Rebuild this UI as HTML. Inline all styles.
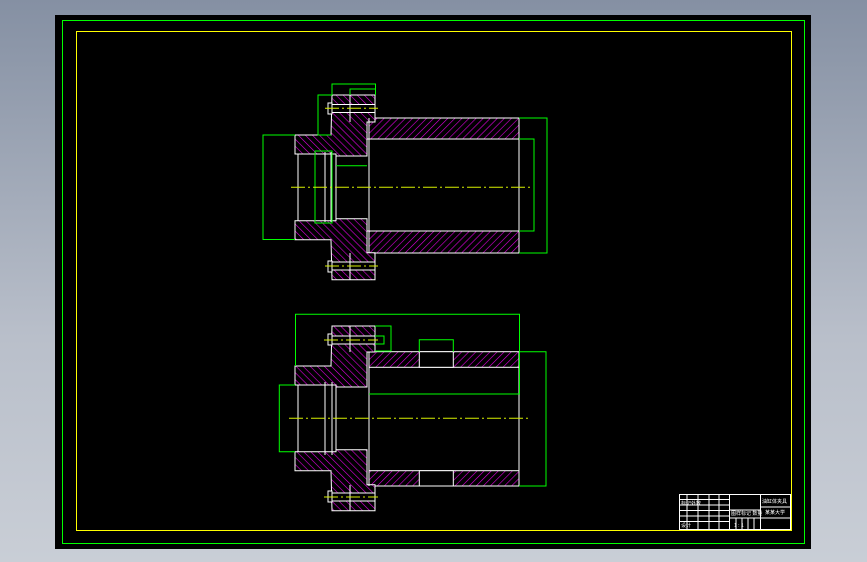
<!DOCTYPE html>
<html><head><meta charset="utf-8"><style>
html,body{margin:0;padding:0;width:867px;height:562px;overflow:hidden;background:linear-gradient(#8590a3,#b9bfca 60%,#c9ced6);}
svg{position:absolute;left:0;top:0}
</style></head><body>
<svg width="867" height="562" viewBox="0 0 867 562" xmlns="http://www.w3.org/2000/svg">
<defs>
<pattern id="h1" patternUnits="userSpaceOnUse" width="5" height="5" patternTransform="rotate(45)"><rect width="5" height="5" fill="#000"/><line x1="0" y1="0" x2="0" y2="5" stroke="#e000e0" stroke-width="1.2"/></pattern>
<pattern id="h2" patternUnits="userSpaceOnUse" width="5" height="5" patternTransform="rotate(-45)"><rect width="5" height="5" fill="#000"/><line x1="0" y1="0" x2="0" y2="5" stroke="#e000e0" stroke-width="1.2"/></pattern>
</defs>
<rect x="55" y="15" width="756" height="534" fill="#000"/>
<rect x="62.5" y="20.5" width="742" height="523" fill="none" stroke="#00ff00" stroke-width="1"/>
<rect x="76.5" y="31.5" width="715" height="499" fill="none" stroke="#ffff00" stroke-width="1"/>

<!-- TOP VIEW -->
<g stroke="#fff" stroke-width="1">
<rect x="369" y="118" width="150" height="21" fill="url(#h1)"/>
<rect x="369" y="231" width="150" height="22" fill="url(#h1)"/>
<polygon points="295,135 331,135 332,95 375,95 375,122 367,122 367,156 336,156 336,154 295,154" fill="url(#h2)"/>
<polygon points="295,239.7 331,239.7 332,279.7 375,279.7 375,252.7 367,252.7 367,218.7 336,218.7 336,220.7 295,220.7" fill="url(#h2)"/>
<line x1="369" y1="118" x2="369" y2="253"/>
<line x1="519" y1="118" x2="519" y2="253"/>
<line x1="367" y1="139" x2="519" y2="139"/><line x1="367" y1="231" x2="519" y2="231"/>
<line x1="298" y1="154" x2="298" y2="221"/>
<line x1="325" y1="152" x2="325" y2="222"/><line x1="331" y1="152" x2="331" y2="222"/>
<line x1="336" y1="156" x2="336" y2="219"/>
<rect x="332" y="104.5" width="43" height="8" fill="#000"/>
<rect x="332" y="262" width="43" height="8" fill="#000"/>
<rect x="328" y="103" width="4" height="11" fill="#000"/>
<rect x="328" y="261" width="4" height="11" fill="#000"/>
<line x1="350" y1="95" x2="350" y2="122"/><line x1="350" y1="253" x2="350" y2="280"/>
</g>
<g stroke="#00ff00" stroke-width="1" fill="none">
<polyline points="332,95 332,84 375.5,84 375.5,95"/>
<polyline points="350,95 350,89 375.5,89"/>
<polyline points="332,95 318,95 318,135 331,135"/>
<polyline points="295,135 263,135 263,239.5 295,239.5"/>
<polyline points="519,118 547,118 547,253 519,253"/>
<polyline points="519,139 534,139 534,231 519,231"/>
<rect x="315" y="151" width="17" height="72"/>
<line x1="336" y1="165.7" x2="367" y2="165.7"/>
</g>
<g stroke="#d8f000" stroke-width="1" stroke-dasharray="14,3,2,3">
<line x1="291" y1="187.3" x2="530" y2="187.3"/>
<line x1="325" y1="108.3" x2="378" y2="108.3"/>
<line x1="325" y1="266" x2="378" y2="266"/>
</g>

<!-- BOTTOM VIEW -->
<g stroke="#fff" stroke-width="1">
<rect x="369" y="351.7" width="150" height="15.6" fill="url(#h1)"/>
<rect x="369" y="470.7" width="150" height="15.3" fill="url(#h1)"/>
<rect x="419.3" y="351.7" width="34" height="15.6" fill="#000"/>
<rect x="419.3" y="470.7" width="34" height="15.3" fill="#000"/>
<polygon points="295,366 331,366 332,326 375,326 375,352 367,352 367,387 336,387 336,385 295,385" fill="url(#h2)"/>
<polygon points="295,470.7 331,470.7 332,510.7 375,510.7 375,484.7 367,484.7 367,449.7 336,449.7 336,451.7 295,451.7" fill="url(#h2)"/>
<line x1="369" y1="352" x2="369" y2="486"/><line x1="519" y1="352" x2="519" y2="486"/>
<line x1="298" y1="385" x2="298" y2="452"/>
<line x1="325" y1="382" x2="325" y2="455"/><line x1="332" y1="382" x2="332" y2="455"/>
<line x1="336" y1="387" x2="336" y2="450"/>
<rect x="332" y="336" width="43" height="8" fill="#000"/>
<rect x="332" y="493" width="43" height="8" fill="#000"/>
<rect x="328" y="334" width="4" height="11" fill="#000"/>
<rect x="328" y="491" width="4" height="11" fill="#000"/>
<line x1="350" y1="326" x2="350" y2="352"/><line x1="350" y1="485" x2="350" y2="511"/>
</g>
<g stroke="#00ff00" stroke-width="1" fill="none">
<polyline points="295.5,366 295.5,314.3 519.5,314.3 519.5,394 369,394"/>
<polyline points="519,351.7 546,351.7 546,486 519,486"/>
<polyline points="295,385 279.3,385 279.3,451.7 295,451.7"/>
<polyline points="419.3,351.7 419.3,339.7 453.3,339.7 453.3,351.7"/>
<polyline points="375,326 391,326 391,351 375,351"/>
<polyline points="375,336 384,336 384,344 375,344"/>
</g>
<g stroke="#d8f000" stroke-width="1" stroke-dasharray="14,3,2,3">
<line x1="289" y1="418.3" x2="530" y2="418.3"/>
<line x1="324" y1="340" x2="378" y2="340"/>
<line x1="324" y1="497" x2="378" y2="497"/>
</g>

<!-- TITLE BLOCK -->
<g stroke="#fff" stroke-width="1" fill="none">
<rect x="679.5" y="494.5" width="111" height="35"/>
<line x1="729.5" y1="494.5" x2="729.5" y2="530"/>
<line x1="760.5" y1="494.5" x2="760.5" y2="530"/>
<line x1="760.5" y1="507" x2="791" y2="507"/>
<line x1="760.5" y1="518" x2="791" y2="518"/>
<line x1="729.5" y1="510" x2="760.5" y2="510"/>
<line x1="729.5" y1="518" x2="760.5" y2="518"/>
<line x1="687" y1="494.5" x2="687" y2="530"/>
<line x1="698" y1="494.5" x2="698" y2="530"/>
<line x1="709" y1="494.5" x2="709" y2="530"/>
<line x1="719" y1="494.5" x2="719" y2="530"/>
<line x1="679.5" y1="499.5" x2="729.5" y2="499.5"/>
<line x1="679.5" y1="505" x2="729.5" y2="505"/>
<line x1="679.5" y1="510.5" x2="729.5" y2="510.5"/>
<line x1="679.5" y1="516" x2="729.5" y2="516"/>
<line x1="679.5" y1="521.5" x2="729.5" y2="521.5"/>
<line x1="736" y1="518" x2="736" y2="530"/><line x1="742" y1="518" x2="742" y2="530"/><line x1="748" y1="518" x2="748" y2="530"/><line x1="754" y1="518" x2="754" y2="530"/>
</g>
<g fill="#fff" font-family="Liberation Sans, 'Noto Sans CJK SC', sans-serif" font-size="5">
<text x="762" y="503">油缸体夹具</text>
<text x="765" y="514">某某大学</text>
<text x="731" y="515">图样标记 数量</text>
<text x="681" y="505">标记处数</text>
<text x="681" y="527">设计</text>
<text x="734" y="527">1 : 1</text>
</g>
</svg>
</body></html>
